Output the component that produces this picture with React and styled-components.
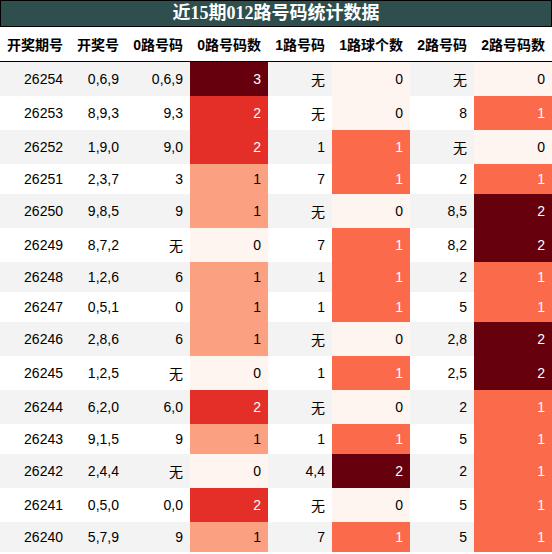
import styled, { createGlobalStyle } from "styled-components";

const GlobalStyle = createGlobalStyle`
  body {
    margin: 0;
    background: #ffffff;
  }
`;

const Wrapper = styled.div`
  width: 552px;
`;

const TitleBar = styled.div`
  height: 25px;
  line-height: 25px;
  border: 1px solid #000000;
  background-color: #2f4f4f;
  color: #ffffff;
  font-family: "Liberation Serif", "Noto Sans CJK SC", serif;
  font-size: 18px;
  font-weight: bold;
  text-align: center;
`;

const Table = styled.table`
  width: 552px;
  border-collapse: collapse;
  table-layout: fixed;
  font-family: "Liberation Sans", "Noto Sans CJK SC", sans-serif;
  font-size: 14px;
  color: #000000;
`;

const HeadCell = styled.th`
  padding: 7px 7px 7px 0;
  text-align: right;
  font-weight: bold;
  white-space: nowrap;
  border-bottom: 1px solid #000000;
`;

const Row = styled.tr`
  background-color: ${(props) => (props.striped ? "#f3f3f3" : "#ffffff")};
`;

const Cell = styled.td`
  padding: 7px 7px 7px 0;
  text-align: right;
  white-space: nowrap;
  background-color: ${(props) => props.bg || "transparent"};
  color: ${(props) => (props.light ? "#ffffff" : "#000000")};
`;

const widths = [70, 56, 64, 78, 64, 78, 64, 78];

const headers = [
  "开奖期号",
  "开奖号",
  "0路号码",
  "0路号码数",
  "1路号码",
  "1路球个数",
  "2路号码",
  "2路号码数",
];

// 期号, 开奖号, 0路号码, 0路数, 1路号码, 1路数, 2路号码, 2路数
const rows = [
  ["26254", "0,6,9", "0,6,9", 3, "无", 0, "无", 0],
  ["26253", "8,9,3", "9,3", 2, "无", 0, "8", 1],
  ["26252", "1,9,0", "9,0", 2, "1", 1, "无", 0],
  ["26251", "2,3,7", "3", 1, "7", 1, "2", 1],
  ["26250", "9,8,5", "9", 1, "无", 0, "8,5", 2],
  ["26249", "8,7,2", "无", 0, "7", 1, "8,2", 2],
  ["26248", "1,2,6", "6", 1, "1", 1, "2", 1],
  ["26247", "0,5,1", "0", 1, "1", 1, "5", 1],
  ["26246", "2,8,6", "6", 1, "无", 0, "2,8", 2],
  ["26245", "1,2,5", "无", 0, "1", 1, "2,5", 2],
  ["26244", "6,2,0", "6,0", 2, "无", 0, "2", 1],
  ["26243", "9,1,5", "9", 1, "1", 1, "5", 1],
  ["26242", "2,4,4", "无", 0, "4,4", 2, "2", 1],
  ["26241", "0,5,0", "0,0", 2, "无", 0, "5", 1],
  ["26240", "5,7,9", "9", 1, "7", 1, "5", 1],
];

// Reds colour scale, keyed by the column's max value
const scales = {
  3: ["#fff5f0", "#fca082", "#e32f27", "#67000d"],
  2: ["#fff5f0", "#fb6a4a", "#67000d"],
};

const darkColors = ["#e32f27", "#67000d", "#fb6a4a"];

function HeatCell({ value, max }) {
  const bg = scales[max][value];
  return (
    <Cell bg={bg} light={darkColors.includes(bg)}>
      {value}
    </Cell>
  );
}

function App() {
  return (
    <Wrapper>
      <GlobalStyle />
      <TitleBar>近15期012路号码统计数据</TitleBar>
      <Table>
        <colgroup>
          {widths.map((w, i) => (
            <col key={i} style={{ width: w }} />
          ))}
        </colgroup>
        <thead>
          <tr>
            {headers.map((h) => (
              <HeadCell key={h}>{h}</HeadCell>
            ))}
          </tr>
        </thead>
        <tbody>
          {rows.map((r, i) => (
            <Row key={r[0]} striped={i % 2 === 0}>
              <Cell>{r[0]}</Cell>
              <Cell>{r[1]}</Cell>
              <Cell>{r[2]}</Cell>
              <HeatCell value={r[3]} max={3} />
              <Cell>{r[4]}</Cell>
              <HeatCell value={r[5]} max={2} />
              <Cell>{r[6]}</Cell>
              <HeatCell value={r[7]} max={2} />
            </Row>
          ))}
        </tbody>
      </Table>
    </Wrapper>
  );
}

export default App;
